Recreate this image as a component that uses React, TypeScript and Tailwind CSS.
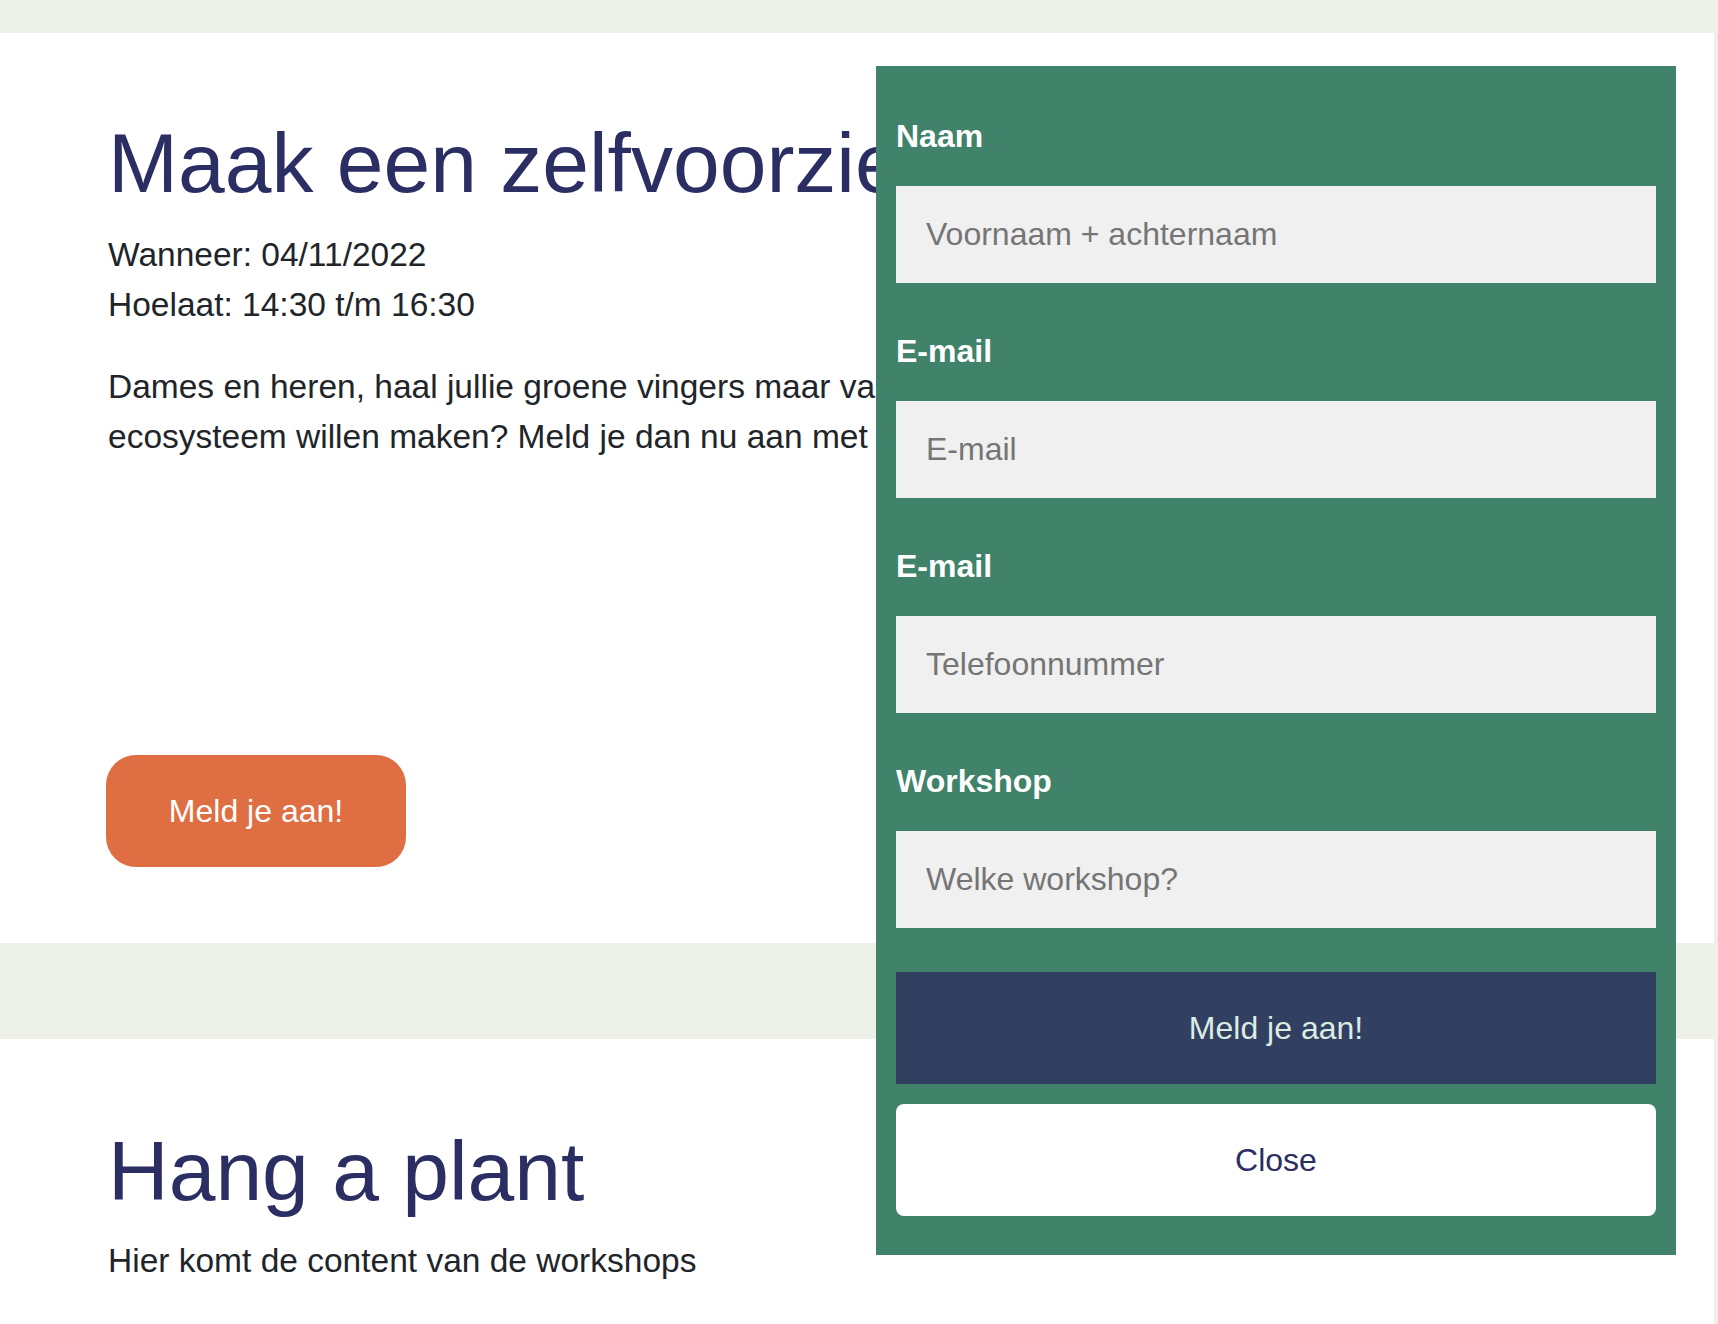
import React from "react";

const font = { fontFamily: '"Liberation Sans", Arial, Helvetica, sans-serif' };

function Field({ label, placeholder, first }: { label: string; placeholder: string; first?: boolean }) {
  return (
    <div className={first ? "" : "mt-[50px]"}>
      <label className="block text-[32px] leading-[36px] font-bold text-white">{label}</label>
      <input
        type="text"
        placeholder={placeholder}
        className="mt-[32px] block h-[97px] w-full bg-[#f0f0f0] pl-[30px] text-[32px] text-[#222] placeholder:text-[#757575] outline-none"
      />
    </div>
  );
}

export default function App() {
  return (
    <div className="relative min-h-[1324px] bg-[#eef1e8] pt-[33px]" style={font}>
      <div className="w-[1714px]">
        <section className="h-[910px] bg-white pl-[108px] pt-[82px]">
          <h1 className="whitespace-nowrap text-[84px] leading-[96px] font-normal text-[#2b2e63]">
            Maak een zelfvoorzienend ecosysteem
          </h1>
          <div className="mt-[19px] text-[33.5px] leading-[50px] text-[#212529]">
            <p>Wanneer: 04/11/2022</p>
            <p>Hoelaat: 14:30 t/m 16:30</p>
          </div>
          <p className="mt-[32px] text-[33.5px] leading-[50px] text-[#212529] whitespace-nowrap">
            Dames en heren, haal jullie groene vingers maar van stal! Wie wil er samen
            <br />
            ecosysteem willen maken? Meld je dan nu aan met het formulier!
          </p>
          <button className="mt-[293px] ml-[-2px] flex h-[112px] w-[300px] items-center justify-center rounded-[30px] bg-[#df6f42] text-[32px] text-white">
            Meld je aan!
          </button>
        </section>
        <div className="h-[96px]" />
        <section className="h-[300px] bg-white pl-[108px] pt-[84px]">
          <h2 className="text-[84px] leading-[96px] font-normal text-[#2b2e63]">Hang a plant</h2>
          <p className="mt-[17px] text-[33.5px] leading-[50px] text-[#212529]">Hier komt de content van de workshops</p>
        </section>
      </div>

      <div className="absolute left-[876px] top-[66px] w-[800px] bg-[#40826a] px-[20px] pt-[52px] pb-[39px]">
        <Field first label="Naam" placeholder="Voornaam + achternaam" />
        <Field label="E-mail" placeholder="E-mail" />
        <Field label="E-mail" placeholder="Telefoonnummer" />
        <Field label="Workshop" placeholder="Welke workshop?" />
        <button className="mt-[44px] flex h-[112px] w-full items-center justify-center bg-[#314061] text-[32px] text-[#dcebe4]">
          Meld je aan!
        </button>
        <button className="mt-[20px] flex h-[112px] w-full items-center justify-center rounded-[8px] bg-white text-[32px] text-[#2b2e63]">
          Close
        </button>
      </div>
    </div>
  );
}
